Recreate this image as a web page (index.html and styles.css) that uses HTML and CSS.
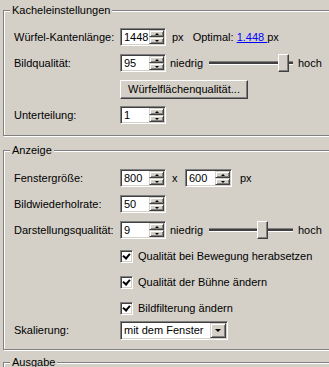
FILE: index.html
```html
<!DOCTYPE html>
<html lang="de">
<head>
    <meta charset="UTF-8">
    <title>Einstellungen</title>
    <link rel="stylesheet" href="styles.css">
</head>
<body>
    <fieldset class="group group-tiles">
        <legend>Kacheleinstellungen</legend>
        <div class="rows">
            <div class="row">
                <span class="label">Würfel-Kantenlänge:</span>
                <div class="spin"><span class="spin-value">1448</span><span class="spin-btns"><span class="spin-up"></span><span class="spin-down"></span></span></div>
                <span class="unit">px</span>
                <span class="optimal">Optimal: <a href="#">1.448 </a>px</span>
            </div>
            <div class="row">
                <span class="label">Bildqualität:</span>
                <div class="spin"><span class="spin-value">95</span><span class="spin-btns"><span class="spin-up"></span><span class="spin-down"></span></span></div>
                <span class="low">niedrig</span>
                <div class="slider"><div class="track"></div><div class="thumb thumb-high"></div></div>
                <span class="high">hoch</span>
            </div>
            <div class="row indent">
                <button class="btn">Würfelflächenqualität...</button>
            </div>
            <div class="row">
                <span class="label">Unterteilung:</span>
                <div class="spin"><span class="spin-value">1</span><span class="spin-btns"><span class="spin-up"></span><span class="spin-down"></span></span></div>
            </div>
        </div>
    </fieldset>

    <fieldset class="group group-display">
        <legend>Anzeige</legend>
        <div class="rows">
            <div class="row">
                <span class="label">Fenstergröße:</span>
                <div class="spin"><span class="spin-value">800</span><span class="spin-btns"><span class="spin-up"></span><span class="spin-down"></span></span></div>
                <span class="times">x</span>
                <div class="spin spin-wide"><span class="spin-value">600</span><span class="spin-btns"><span class="spin-up"></span><span class="spin-down"></span></span></div>
                <span class="unit-wide">px</span>
            </div>
            <div class="row">
                <span class="label">Bildwiederholrate:</span>
                <div class="spin"><span class="spin-value">50</span><span class="spin-btns"><span class="spin-up"></span><span class="spin-down"></span></span></div>
            </div>
            <div class="row">
                <span class="label">Darstellungsqualität:</span>
                <div class="spin"><span class="spin-value">9</span><span class="spin-btns"><span class="spin-up"></span><span class="spin-down"></span></span></div>
                <span class="low">niedrig</span>
                <div class="slider"><div class="track"></div><div class="thumb thumb-mid"></div></div>
                <span class="high">hoch</span>
            </div>
            <div class="row indent">
                <span class="check"></span>
                <span class="check-label">Qualität bei Bewegung herabsetzen</span>
            </div>
            <div class="row indent">
                <span class="check"></span>
                <span class="check-label">Qualität der Bühne ändern</span>
            </div>
            <div class="row indent">
                <span class="check"></span>
                <span class="check-label">Bildfilterung ändern</span>
            </div>
            <div class="row row-tight">
                <span class="label">Skalierung:</span>
                <div class="select"><span class="select-value">mit dem Fenster</span><span class="select-btn"></span></div>
            </div>
        </div>
    </fieldset>

    <fieldset class="group group-output">
        <legend>Ausgabe</legend>
        <div class="rows"></div>
    </fieldset>
</body>
</html>
```

FILE: styles.css
```css
body {
    margin: 0;
    background: #d4d0c8;
    font-family: 'Liberation Sans', Arial, sans-serif;
    font-size: 11px;
    color: #000;
    overflow: hidden;
}

/* etched group box */
.group {
    margin: 0 0 0 3px;
    width: 360px;
    padding: 11px 0 11px 10px;
    border: 1px solid #808080;
    box-shadow: inset 1px 1px 0 #fff, 1px 1px 0 #fff;
}

.group-tiles {
    margin-top: 4px;
}

.group-display {
    margin-top: 8px;
    padding-top: 12px;
    padding-bottom: 10px;
}

.group-output {
    margin-top: 6px;
}

.group legend {
    margin-left: -4px;
    padding: 0 2px;
    line-height: 13px;
    background: #d4d0c8;
}

.rows {
    display: flex;
    flex-direction: column;
    gap: 8px;
}

.row {
    display: flex;
    align-items: center;
    height: 18px;
}

.row-tight {
    margin-top: -4px;
}

.label {
    width: 106px;
    flex-shrink: 0;
}

.indent {
    padding-left: 106px;
}

/* sunken fields */
.spin,
.select {
    box-sizing: border-box;
    height: 18px;
    display: flex;
    background: #fff;
    border: 1px solid;
    border-color: #808080 #fff #fff #808080;
    box-shadow: inset 1px 1px 0 #404040, inset -1px -1px 0 #d4d0c8;
    padding: 1px;
}

.spin {
    width: 46px;
}

.spin-wide {
    width: 47px;
}

.spin-value,
.select-value {
    flex: 1;
    padding-left: 2px;
    line-height: 14px;
}

.spin-btns {
    width: 15px;
    display: flex;
    flex-direction: column;
}

.spin-up,
.spin-down,
.select-btn {
    position: relative;
    box-sizing: border-box;
    background: #d4d0c8;
    border: 1px solid;
    border-color: #d4d0c8 #404040 #404040 #d4d0c8;
    box-shadow: inset 1px 1px 0 #fff, inset -1px -1px 0 #808080;
}

.spin-up,
.spin-down {
    flex: 1;
}

.spin-up::after,
.spin-down::after,
.select-btn::after {
    content: "";
    position: absolute;
    left: 50%;
    top: 50%;
    width: 0;
    height: 0;
    border-left: 2px solid transparent;
    border-right: 2px solid transparent;
}

.spin-up::after {
    margin: -1px 0 0 -2px;
    border-bottom: 2px solid #000;
}

.spin-down::after {
    margin: -1px 0 0 -2px;
    border-top: 2px solid #000;
}

.unit {
    margin-left: 6px;
}

.optimal {
    margin-left: 9px;
}

.optimal a {
    color: #0000ff;
}

.times {
    margin-left: 6px;
    width: 13px;
}

.unit-wide {
    margin-left: 8px;
}

/* trackbar */
.low {
    margin-left: 4px;
    width: 37px;
}

.slider {
    position: relative;
    width: 88px;
    height: 18px;
}

.track {
    position: absolute;
    left: 2px;
    right: 2px;
    top: 7px;
    height: 2px;
    border-top: 1px solid #808080;
    border-bottom: 1px solid #fff;
    background: #404040;
}

.thumb {
    position: absolute;
    top: 0;
    width: 11px;
    height: 18px;
    box-sizing: border-box;
    background: #d4d0c8;
    border: 1px solid;
    border-color: #fff #404040 #404040 #fff;
    box-shadow: inset -1px -1px 0 #808080;
}

.thumb-high {
    left: 71px;
}

.thumb-mid {
    left: 50px;
}

.high {
    margin-left: 3px;
}

/* push button */
.btn {
    box-sizing: border-box;
    width: 128px;
    height: 19px;
    padding: 0;
    font: inherit;
    color: #000;
    background: #d4d0c8;
    border: 1px solid;
    border-color: #fff #404040 #404040 #fff;
    box-shadow: inset -1px -1px 0 #808080;
}

/* checkbox */
.check {
    position: relative;
    box-sizing: border-box;
    width: 13px;
    height: 13px;
    background: #fff;
    border: 1px solid;
    border-color: #808080 #fff #fff #808080;
    box-shadow: inset 1px 1px 0 #404040, inset -1px -1px 0 #d4d0c8;
}

.check::after {
    content: "";
    position: absolute;
    left: 3px;
    top: 1px;
    width: 3px;
    height: 5px;
    border: solid #000;
    border-width: 0 2px 2px 0;
    transform: rotate(40deg);
}

.check-label {
    margin-left: 5px;
}

/* combo box */
.select {
    width: 108px;
    height: 19px;
}

.select-btn {
    width: 16px;
}

.select-btn::after {
    margin: -1px 0 0 -3px;
    border-left-width: 3px;
    border-right-width: 3px;
    border-top: 3px solid #000;
}
```
